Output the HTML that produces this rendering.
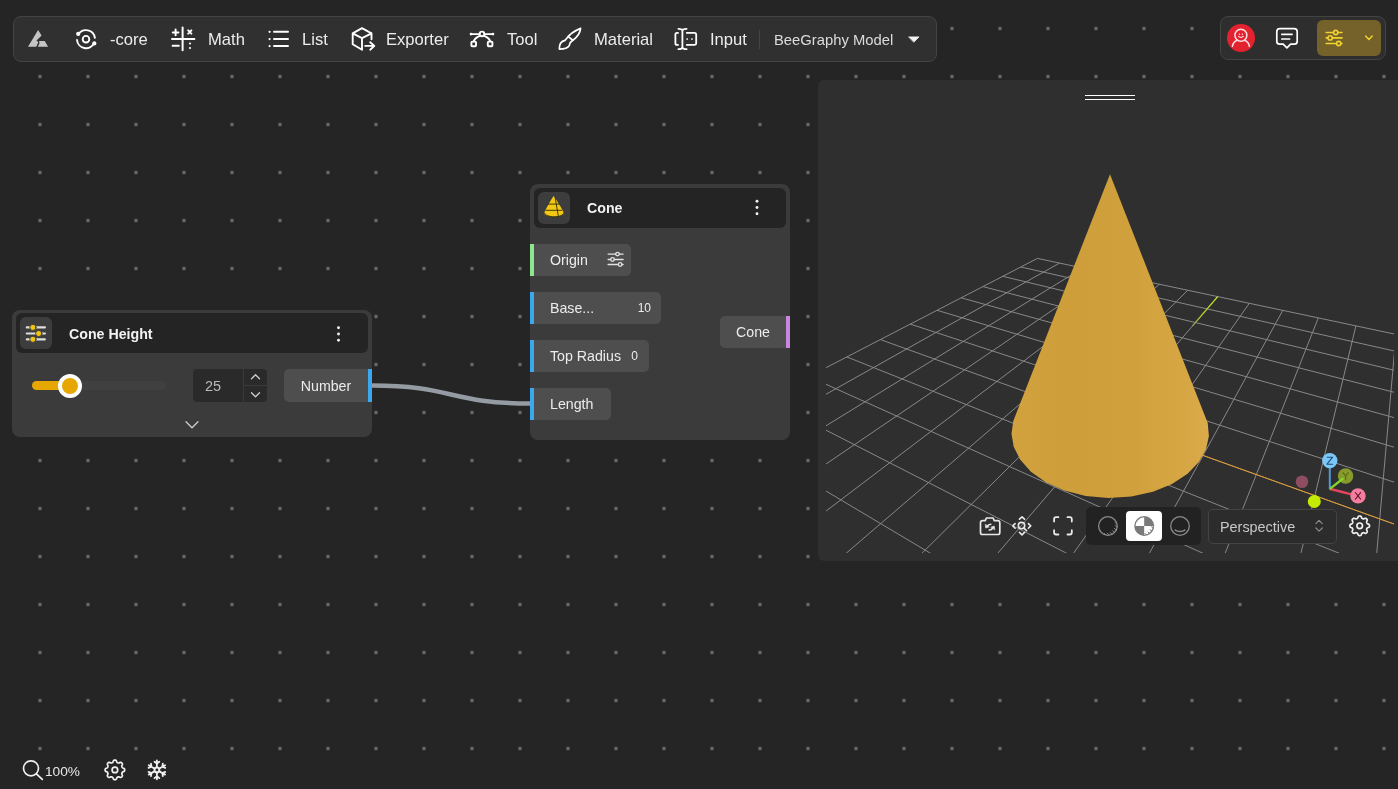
<!DOCTYPE html>
<html><head><meta charset="utf-8">
<style>
*{box-sizing:border-box;margin:0;padding:0}
html,body{width:1398px;height:789px;overflow:hidden}
body{position:relative;background-color:#252525;font-family:"Liberation Sans",sans-serif;color:#ececec;
background-image:radial-gradient(circle at 24px 24.5px,#707070 0,#656565 1.2px,rgba(95,95,95,0) 2.4px);
background-size:48px 48px;background-position:16px 4px}
.abs{position:absolute}
.tb{position:absolute;left:13px;top:16px;width:924px;height:46px;border:1px solid #444;border-radius:8px;background:#303030}
.tt{position:absolute;top:30px;height:20px;line-height:20px;font-size:16.6px;color:#ececec;white-space:nowrap}
svg{position:absolute;overflow:visible}
.node{position:absolute;background:#3b3b3b;border-radius:8px}
.hdr{position:absolute;background:#242424;border-radius:6px}
.ibox{position:absolute;width:32px;height:32px;background:#3d3d3d;border-radius:6px}
.title{position:absolute;font-weight:bold;font-size:14.2px;height:20px;line-height:20px;color:#f2f2f2;white-space:nowrap}
.port{position:absolute;height:32px;background:#4e4e4e;border-radius:0 5px 5px 0;font-size:14.2px;line-height:32px;color:#ececec;white-space:nowrap}
.port .s{position:absolute;left:0;top:0;width:4px;height:32px}
div{will-change:transform}
</style></head><body>

<!-- top toolbar -->
<div class="tb"></div>

<div class="tt" style="left:110px">-core</div>
<div class="tt" style="left:208px">Math</div>
<div class="tt" style="left:302px">List</div>
<div class="tt" style="left:386px">Exporter</div>
<div class="tt" style="left:507px">Tool</div>
<div class="tt" style="left:594px">Material</div>
<div class="tt" style="left:710px">Input</div>
<div class="abs" style="left:759px;top:30px;width:1px;height:19px;background:#444"></div>
<div class="tt" style="left:774px;font-size:14.8px;color:#dcdcdc">BeeGraphy Model</div>



<!-- top-right panel -->
<div class="abs" style="left:1220px;top:16px;width:166px;height:44px;border:1px solid #434343;border-radius:8px;background:#2e2e2e"></div>
<div class="abs" style="left:1317px;top:20px;width:64px;height:36px;border-radius:6px;background:#75612a"></div>
<div class="abs" style="left:1227px;top:24px;width:28px;height:28px;border-radius:50%;background:#e3222f"></div>

<!-- viewport panel -->
<div class="abs" style="left:818px;top:80px;width:590px;height:481px;border-radius:6px;background:#2f2f2f"></div>

<!--VP-->
<svg width="1398" height="789" style="left:0;top:0" fill="none">
 <defs><clipPath id="vc"><rect x="826" y="88" width="568" height="465"/></clipPath>
 <linearGradient id="cg" x1="1011" y1="0" x2="1209" y2="0" gradientUnits="userSpaceOnUse">
  <stop offset="0" stop-color="#d2a23f"/><stop offset="0.25" stop-color="#cd9e3a"/><stop offset="0.6" stop-color="#cfa03b"/><stop offset="0.9" stop-color="#d7a745"/><stop offset="1" stop-color="#dcac4b"/></linearGradient>
 <linearGradient id="yg" x1="1217.7" y1="296.6" x2="1192.3" y2="326.2" gradientUnits="userSpaceOnUse">
  <stop offset="0" stop-color="#c8e01e"/><stop offset="0.6" stop-color="#b8d41e"/><stop offset="1" stop-color="#8f9a60"/></linearGradient>
 </defs>
 <g clip-path="url(#vc)">
  <path d="M1037.4 258.4L505.1 533.6M1037.4 258.4L1484.4 353.1M1059.5 263.1L528.6 561.3M1020.8 267.0L1488.6 372.2M1082.7 268.0L555.0 592.4M1002.7 276.3L1493.4 394.1M1107.0 273.1L585.0 627.7M982.9 286.6L1498.9 419.2M1132.6 278.5L619.1 668.0M961.1 297.8L1505.3 448.4M1159.5 284.2L658.5 714.4M937.1 310.3L1512.9 482.8M1187.8 290.2L704.4 768.4M910.3 324.1L1521.9 523.9M1217.7 296.6L758.6 832.3M880.4 339.6L1532.9 573.9M1249.3 303.3L823.5 908.8M846.8 356.9L1546.5 635.9M1282.8 310.4L902.7 1002.1M808.8 376.6L1563.9 715.0M1318.3 317.9L1001.5 1118.5M765.3 399.1L1586.8 819.4M1355.9 325.9L1128.1 1267.8M715.2 425.0L1618.4 963.2M1396.0 334.3L1296.4 1466.1M656.8 455.2L1664.8 1174.4M1438.7 343.4L1530.8 1742.3M587.8 490.9L1739.5 1514.6M1484.4 353.1L1879.9 2153.7M505.1 533.6L1879.9 2153.7" stroke="#888" stroke-width="1"/>
  <path d="M1217.7 296.6L1192.3 326.2" stroke="url(#yg)" stroke-width="1.3"/>
  <path d="M1110.2 422.1L1532.9 573.9" stroke="#e39a28" stroke-width="1"/>
  <path d="M1011.5 433.7L1013.3 421.0L1110.0 174.2L1207.7 423.1L1208.9 435.9L1206.1 448.9L1199.0 461.8L1187.6 473.7L1172.0 483.9L1153.0 491.8L1131.4 496.6L1108.5 498.1L1085.7 496.0L1064.4 490.6L1045.8 482.3L1030.9 471.8L1020.1 459.6L1013.7 446.7Z" fill="url(#cg)"/>
 </g>
</svg>
<svg width="1398" height="789" style="left:0;top:0" fill="none"><path d="M372 385.5C452 385.5 450 403.5 530 403.5" stroke="#959ba3" stroke-width="4.6"/></svg>
<!-- nodes -->
<div class="node" style="left:12px;top:310px;width:360px;height:127px"></div>
<div class="hdr" style="left:16px;top:313px;width:352px;height:40px"></div>
<div class="ibox" style="left:20px;top:317px"></div>
<div class="title" style="left:69px;top:324px">Cone Height</div>

<div class="node" style="left:530px;top:184px;width:260px;height:256px"></div>
<div class="hdr" style="left:534px;top:188px;width:252px;height:40px"></div>
<div class="ibox" style="left:538px;top:192px"></div>
<div class="title" style="left:587px;top:198px">Cone</div>

<!-- Cone Height body -->
<div class="abs" style="left:32px;top:381px;width:134px;height:9px;border-radius:5px;background:#404040"></div>
<div class="abs" style="left:32px;top:381px;width:40px;height:9px;border-radius:5px;background:#e6a700"></div>
<div class="abs" style="left:58px;top:373.5px;width:24px;height:24px;border-radius:50%;background:#e6a700;border:4px solid #fff"></div>
<div class="abs" style="left:193px;top:369px;width:74px;height:33px;border-radius:4px;background:#2a2a2a"></div>
<div class="abs" style="left:243px;top:369px;width:1px;height:33px;background:#3a3a3a"></div>
<div class="abs" style="left:244px;top:385px;width:23px;height:1px;background:#3a3a3a"></div>
<div class="abs" style="left:183px;top:376px;width:60px;height:20px;line-height:20px;text-align:center;font-size:14.5px;color:#bababa">25</div>
<div class="port" style="left:284px;top:369px;width:88px;height:33px;border-radius:5px 0 0 5px;line-height:35px;text-align:center;padding-right:4px">Number<div class="s" style="left:auto;right:0;height:33px;background:#3ba7ee"></div></div>

<!-- Cone inputs -->
<div class="port" style="left:530px;top:244px;width:101px;padding-left:20px">Origin<div class="s" style="background:#8ee68e"></div></div>
<div class="port" style="left:530px;top:292px;width:131px;padding-left:20px">Base...<div class="s" style="background:#3ba7ee"></div><span style="position:absolute;right:10px;top:0;font-size:12px">10</span></div>
<div class="port" style="left:530px;top:340px;width:119px;padding-left:20px">Top Radius<div class="s" style="background:#3ba7ee"></div><span style="position:absolute;right:11px;top:0;font-size:12px">0</span></div>
<div class="port" style="left:530px;top:388px;width:81px;padding-left:20px">Length<div class="s" style="background:#3ba7ee"></div></div>
<div class="port" style="left:720px;top:316px;width:70px;border-radius:5px 0 0 5px;padding-left:16px">Cone<div class="s" style="left:auto;right:0;background:#c886de"></div></div>



<!-- viewport overlays -->
<div class="abs" style="left:1085px;top:95px;width:50px;height:1px;background:#fff"></div>
<div class="abs" style="left:1085px;top:99px;width:50px;height:1px;background:#fff"></div>
<div class="abs" style="left:1086px;top:507px;width:115px;height:38px;border-radius:5px;background:#222"></div>
<div class="abs" style="left:1126px;top:511px;width:36px;height:30px;border-radius:4px;background:#fff"></div>
<div class="abs" style="left:1208px;top:509px;width:129px;height:35px;border-radius:5px;background:#2c2c2c;border:1px solid #444"></div>
<div class="abs" style="left:1220px;top:517px;height:20px;line-height:20px;font-size:14.4px;color:#c8c8c8;white-space:nowrap">Perspective</div>
<div class="abs" style="left:20px;top:760px;height:20px;line-height:20px;font-size:13.7px;color:#e8e8e8;white-space:nowrap"></div>
<div class="abs" style="left:45px;top:762px;height:20px;line-height:20px;font-size:13.7px;color:#e8e8e8;white-space:nowrap">100%</div>
<!--ICONS-->
<svg width="1398" height="789" style="left:0;top:0" fill="none" stroke="#fff" stroke-width="1.9" stroke-linecap="round" stroke-linejoin="round">
 <!-- logo -->
 <path d="M38.1 29.9L41.6 35.6L36.5 40.4L38.3 42.3L36.2 46.8L28 46.8Z" fill="#c4c4c4" stroke="none"/>
 <path d="M37.9 46.8L39.5 43.3L39.1 40.9L44.7 40.9L48.1 46.8Z" fill="#c4c4c4" stroke="none"/>
 <!-- core -->
 <path d="M78.54 34.17A9 9 0 0 1 94.89 37.79M77.03 39.98A9 9 0 0 0 94.02 43.29"/>
 <circle cx="86" cy="39.2" r="3.3"/>
 <circle cx="78.2" cy="33.9" r="2.1" fill="#fff" stroke="none"/>
 <circle cx="94.3" cy="43.4" r="2.1" fill="#fff" stroke="none"/>
 <!-- math -->
 <path d="M182.6 27.5V50.3M172 38.9H194.4M172.8 32.4H178.4M175.6 29.6V35.2M188.2 30.4L191.4 33.6M191.4 30.4L188.2 33.6M172.6 45.7H178.8" stroke-width="2"/>
 <circle cx="190" cy="43.5" r="1.1" fill="#fff" stroke="none"/><circle cx="190" cy="48" r="1.1" fill="#fff" stroke="none"/>
 <!-- list -->
 <path d="M274 31.8H288M274 39.1H288M274 46.1H288" stroke-width="2"/>
 <circle cx="269.6" cy="31.8" r="1.1" fill="#fff" stroke="none"/><circle cx="269.6" cy="39.1" r="1.1" fill="#fff" stroke="none"/><circle cx="269.6" cy="46.1" r="1.1" fill="#fff" stroke="none"/>
 <!-- exporter -->
 <path d="M362 28.2L371.5 33.3V39.2M362 28.2L352.7 33.3L362 38.2L371.5 33.3M352.7 33.3V44.2L362 49.7V38.2M365.2 45.9H374.3M370.2 42.2L374.3 45.9L370.2 49.7"/>
 <!-- tool -->
 <path d="M471 34.1H479.2M484.8 34.1H493M479.6 35.8C476 37.6 474 39.5 473.8 41.4M484.4 35.8C488 37.6 490 39.5 490.2 41.4"/>
 <circle cx="482" cy="33.9" r="2.3"/>
 <rect x="471.4" y="41.6" width="4.6" height="4.6" rx="0.8"/>
 <rect x="487.8" y="41.6" width="4.6" height="4.6" rx="0.8"/>
 <circle cx="471" cy="34.1" r="1.3" fill="#fff" stroke="none"/><circle cx="493" cy="34.1" r="1.3" fill="#fff" stroke="none"/>
 <!-- material -->
 <path d="M580.6 28.4C575.5 30.5 569.5 34.5 566.8 38.3L565 40.4C561 41.2 559.2 44.5 559.3 49.1C563.5 49.1 567.6 48.6 569.2 45.6C569.9 44.3 569.9 43 570.3 42.5L573 40.2C577.3 37 580.2 32.5 580.6 28.4Z" stroke-width="1.7"/>
 <path d="M568.3 36.6L572.5 40" stroke-width="1.7"/>
 <!-- input -->
 <path d="M678 32.9H677C675.9 32.9 675.4 33.6 675.4 34.6V43.2C675.4 44.2 675.9 44.9 677 44.9H678M686.8 32.9H694.4C695.5 32.9 696.2 33.6 696.2 34.7V43.1C696.2 44.2 695.5 44.9 694.4 44.9H686.8M682.4 29.6V48.4M678.4 28.8C680.5 28.8 682.4 29.4 682.4 31M686.6 28.8C684.5 28.8 682.4 29.4 682.4 31M678.4 49.2C680.5 49.2 682.4 48.6 682.4 47M686.6 49.2C684.5 49.2 682.4 48.6 682.4 47" stroke-width="1.8"/>
 <rect x="686.4" y="38.3" width="1.5" height="1.5" fill="#fff" stroke="none"/><rect x="691.2" y="38.3" width="1.5" height="1.5" fill="#fff" stroke="none"/>
 <!-- dropdown triangle -->
 <path d="M909 36.9H919L914 42Z" fill="#f4f4f4" stroke="#f4f4f4" stroke-width="0.8"/>

 <!-- node icons -->
 <g stroke="none" fill="#f0f0f0">
  <circle cx="338.5" cy="327.8" r="1.45"/><circle cx="338.5" cy="334" r="1.45"/><circle cx="338.5" cy="340.2" r="1.45"/>
  <circle cx="757" cy="201.3" r="1.45"/><circle cx="757" cy="207.5" r="1.45"/><circle cx="757" cy="213.7" r="1.45"/>
 </g>
 <path d="M26.8 327.4H44.9M26.8 333.5H44.9M26.8 339.3H44.9" stroke="#dedede" stroke-width="2.2"/>
 <g fill="#f2c40f" stroke="#3d3d3d" stroke-width="1"><circle cx="32.9" cy="327.4" r="3.1"/><circle cx="38.7" cy="333.5" r="3.1"/><circle cx="32.9" cy="339.3" r="3.1"/></g>
 <path d="M553.6 196C552 198 545.5 209.5 544.2 212.8C543.5 214.7 548 216.8 554.2 216.8C560.5 216.8 564.6 214.7 563.8 212.8C562.6 209.5 555.3 198 553.6 196Z" fill="#f3c814" stroke="none"/>
 <path d="M548.3 204.1H559.2M545.9 210.3H561.9M555.2 197.8L558.4 216.4M544.2 212.8C544.8 214.8 549 216.8 554.2 216.8C560 216.8 563.6 214.8 563.8 212.8" stroke="#2d2a10" stroke-width="0.9"/>
 <path d="M186 421.8L192 427.8L198 421.8" stroke="#cfcfcf" stroke-width="1.3"/>
 <path d="M251.5 378.8L255.5 374.8L259.5 378.8M251.5 392.8L255.5 396.8L259.5 392.8" stroke="#cfcfcf" stroke-width="1.3"/>
 <g stroke="#e2e2e2" stroke-width="1.3">
  <path d="M608.1 254.1H615.7M619.3 254.1H623.1M608.1 259.5H610.7M614.3 259.5H623.1M608.1 264.5H618.3M621.9 264.5H623.1"/>
  <circle cx="617.5" cy="254.1" r="1.8"/><circle cx="612.5" cy="259.5" r="1.8"/><circle cx="620.1" cy="264.5" r="1.8"/>
 </g>

 <!-- viewport icons -->
 <g stroke="#e8e8e8" stroke-width="1.7">
  <path d="M982.6 520.7H985.2L986.4 518H993.1L994.3 520.7H997.7C998.9 520.7 999.8 521.6 999.8 522.8V532.4C999.8 533.6 998.9 534.5 997.7 534.5H982.6C981.4 534.5 980.5 533.6 980.5 532.4V522.8C980.5 521.6 981.4 520.7 982.6 520.7Z"/>
  <path d="M990.8 524.2C989.2 524.3 987.9 525 987.2 526.2M989.2 530C990.8 529.9 992.1 529.2 992.8 528" stroke-width="1.6"/><path d="M985.3 524.6L985.7 528.1L988.9 527.1ZM994.7 529.6L994.3 526.1L991.1 527.1Z" fill="#e8e8e8" stroke-width="0.6"/>
  <circle cx="1021.5" cy="525.6" r="3.2" stroke-width="1.6"/>
  <path d="M1023.9 528.1L1026.6 530.6M1019.5 519.2L1022 516.8L1024.5 519.2M1019.5 532.4L1022 534.8L1024.5 532.4M1015.1 523.6L1012.8 525.9L1015.1 528.2M1028.4 523.6L1030.7 525.9L1028.4 528.2" stroke-width="1.6"/>
  <path d="M1054.1 521.5V519.2C1054.1 518.1 1055 517.2 1056.1 517.2H1058.4M1067.5 517.2H1069.8C1070.9 517.2 1071.8 518.1 1071.8 519.2V521.5M1071.8 530.2V532.5C1071.8 533.6 1070.9 534.5 1069.8 534.5H1067.5M1058.4 534.5H1056.1C1055 534.5 1054.1 533.6 1054.1 532.5V530.2" stroke-width="1.8"/>
 </g>
 <g stroke="#8a8a8a" stroke-width="1.3">
  <circle cx="1107.9" cy="526" r="9.3"/>
  <path d="M1117.06 524.39L1115.22 522.55M1117.10 527.35L1115.26 525.51M1116.21 530.17L1114.37 528.34M1114.48 532.58L1112.64 530.74M1112.07 534.31L1110.24 532.47M1109.25 535.20L1107.41 533.36M1106.29 535.16L1104.45 533.32" stroke-width="1"/>
  <circle cx="1180" cy="526" r="9.3"/>
  <path d="M1175.2 530.2C1177.8 532 1182.2 532 1184.8 530.2" stroke-width="1.6"/>
 </g>
 <path d="M1144.2 516.7A9.3 9.3 0 0 1 1153.5 526H1144.2Z" fill="#7a7a7a" stroke="none"/>
 <path d="M1144.2 535.3A9.3 9.3 0 0 1 1134.9 526H1144.2Z" fill="#7a7a7a" stroke="none"/>
 <circle cx="1144.2" cy="526" r="9.3" stroke="#7a7a7a" stroke-width="1.3"/>
 <path d="M1153.46 525.19L1151.77 523.49M1153.18 528.41L1151.49 526.71M1151.82 531.33L1150.12 529.64M1149.53 533.62L1147.84 531.92M1146.61 534.98L1144.91 533.29M1143.39 535.26L1141.69 533.57" stroke="#7a7a7a" stroke-width="1"/>
 <path d="M1315.9 523.6L1319.1 520.4L1322.3 523.6M1315.9 528L1319.1 531.2L1322.3 528" stroke="#8a8a8a" stroke-width="1.2"/>
 <!-- gizmo -->
 <circle cx="1302" cy="481.7" r="6.3" fill="#8e4d60" stroke="none"/>
 <circle cx="1314.3" cy="501.5" r="6.5" fill="#c4ec00" stroke="none"/>
 <path d="M1329.8 468.3V488.6" stroke="#4f9ad8" stroke-width="2"/>
  <path d="M1330.6 489L1350.4 494.2" stroke="#e8435f" stroke-width="2.4"/>
 <circle cx="1329.8" cy="460.6" r="7.7" fill="#7cc6f8" stroke="none"/>
 <circle cx="1345.6" cy="476" r="7.7" fill="#879a2c" stroke="none"/>
 <circle cx="1358" cy="495.9" r="7.7" fill="#f47ea0" stroke="none"/>
 <path d="M1330.6 488.4L1342.7 478.8" stroke="#80d42a" stroke-width="2.4"/>
 <path d="M1327.2 457.2H1332.6L1327 464.2H1332.6" stroke="#1d4f78" stroke-width="1.1"/>
 <path d="M1343 472.6L1345.6 476L1348.2 472.6M1345.6 476V479.6" stroke="#596b12" stroke-width="1.1"/>
 <path d="M1355.4 492.6L1360.6 499.2M1360.6 492.6L1355.4 499.2" stroke="#6e1a2e" stroke-width="1.1"/>
 <!-- bottom-left -->
 <g stroke="#f0f0f0" stroke-width="1.7">
  <circle cx="31" cy="768.3" r="7.5"/>
  <path d="M36.4 773.8L42.3 779.4"/>
 </g>
 <g stroke="#f0f0f0" stroke-width="1.7"><path d="M124.70 769.90L124.68 770.28L124.60 770.66L124.42 771.03L124.06 771.35L123.48 771.61L122.90 771.82L122.52 772.05L122.29 772.30L122.14 772.57L122.01 772.85L121.91 773.13L121.82 773.43L121.80 773.77L121.92 774.20L122.18 774.76L122.40 775.35L122.43 775.84L122.30 776.22L122.09 776.54L121.83 776.83L121.54 777.09L121.22 777.30L120.84 777.43L120.35 777.40L119.76 777.18L119.20 776.92L118.77 776.80L118.43 776.82L118.13 776.91L117.85 777.01L117.57 777.14L117.30 777.29L117.05 777.52L116.82 777.90L116.61 778.48L116.35 779.06L116.03 779.42L115.66 779.60L115.28 779.68L114.90 779.70L114.52 779.68L114.14 779.60L113.77 779.42L113.45 779.06L113.19 778.48L112.98 777.90L112.75 777.52L112.50 777.29L112.23 777.14L111.95 777.01L111.67 776.91L111.37 776.82L111.03 776.80L110.60 776.92L110.04 777.18L109.45 777.40L108.96 777.43L108.58 777.30L108.26 777.09L107.97 776.83L107.71 776.54L107.50 776.22L107.37 775.84L107.40 775.35L107.62 774.76L107.88 774.20L108.00 773.77L107.98 773.43L107.89 773.13L107.79 772.85L107.66 772.57L107.51 772.30L107.28 772.05L106.90 771.82L106.32 771.61L105.74 771.35L105.38 771.03L105.20 770.66L105.12 770.28L105.10 769.90L105.12 769.52L105.20 769.14L105.38 768.77L105.74 768.45L106.32 768.19L106.90 767.98L107.28 767.75L107.51 767.50L107.66 767.23L107.79 766.95L107.89 766.67L107.98 766.37L108.00 766.03L107.88 765.60L107.62 765.04L107.40 764.45L107.37 763.96L107.50 763.58L107.71 763.26L107.97 762.97L108.26 762.71L108.58 762.50L108.96 762.37L109.45 762.40L110.04 762.62L110.60 762.88L111.03 763.00L111.37 762.98L111.67 762.89L111.95 762.79L112.23 762.66L112.50 762.51L112.75 762.28L112.98 761.90L113.19 761.32L113.45 760.74L113.77 760.38L114.14 760.20L114.52 760.12L114.90 760.10L115.28 760.12L115.66 760.20L116.03 760.38L116.35 760.74L116.61 761.32L116.82 761.90L117.05 762.28L117.30 762.51L117.57 762.66L117.85 762.79L118.13 762.89L118.43 762.98L118.77 763.00L119.20 762.88L119.76 762.62L120.35 762.40L120.84 762.37L121.22 762.50L121.54 762.71L121.83 762.97L122.09 763.26L122.30 763.58L122.43 763.96L122.40 764.45L122.18 765.04L121.92 765.60L121.80 766.03L121.82 766.37L121.91 766.67L122.01 766.95L122.14 767.23L122.29 767.50L122.52 767.75L122.90 767.98L123.48 768.19L124.06 768.45L124.42 768.77L124.60 769.14L124.68 769.52Z"/><circle cx="114.9" cy="769.9" r="2.8"/>
  <path d="M156.90 773.30L156.90 779.30M154.50 778.10L156.90 776.30L159.30 778.10M153.96 771.60L148.76 774.60M148.60 771.92L151.36 773.10L151.00 776.08M153.96 768.20L148.76 765.20M151.00 763.72L151.36 766.70L148.60 767.88M156.90 766.50L156.90 760.50M159.30 761.70L156.90 763.50L154.50 761.70M159.84 768.20L165.04 765.20M165.20 767.88L162.44 766.70L162.80 763.72M159.84 771.60L165.04 774.60M162.80 776.08L162.44 773.10L165.20 771.92" stroke-width="1.8"/><circle cx="156.9" cy="769.9" r="2.4" stroke-width="1.9"/>
  <path d="M1369.50 525.80L1369.48 526.18L1369.40 526.56L1369.22 526.93L1368.86 527.25L1368.28 527.51L1367.70 527.72L1367.32 527.95L1367.09 528.20L1366.94 528.47L1366.81 528.75L1366.71 529.03L1366.62 529.33L1366.60 529.67L1366.72 530.10L1366.98 530.66L1367.20 531.25L1367.23 531.74L1367.10 532.12L1366.89 532.44L1366.63 532.73L1366.34 532.99L1366.02 533.20L1365.64 533.33L1365.15 533.30L1364.56 533.08L1364.00 532.82L1363.57 532.70L1363.23 532.72L1362.93 532.81L1362.65 532.91L1362.37 533.04L1362.10 533.19L1361.85 533.42L1361.62 533.80L1361.41 534.38L1361.15 534.96L1360.83 535.32L1360.46 535.50L1360.08 535.58L1359.70 535.60L1359.32 535.58L1358.94 535.50L1358.57 535.32L1358.25 534.96L1357.99 534.38L1357.78 533.80L1357.55 533.42L1357.30 533.19L1357.03 533.04L1356.75 532.91L1356.47 532.81L1356.17 532.72L1355.83 532.70L1355.40 532.82L1354.84 533.08L1354.25 533.30L1353.76 533.33L1353.38 533.20L1353.06 532.99L1352.77 532.73L1352.51 532.44L1352.30 532.12L1352.17 531.74L1352.20 531.25L1352.42 530.66L1352.68 530.10L1352.80 529.67L1352.78 529.33L1352.69 529.03L1352.59 528.75L1352.46 528.47L1352.31 528.20L1352.08 527.95L1351.70 527.72L1351.12 527.51L1350.54 527.25L1350.18 526.93L1350.00 526.56L1349.92 526.18L1349.90 525.80L1349.92 525.42L1350.00 525.04L1350.18 524.67L1350.54 524.35L1351.12 524.09L1351.70 523.88L1352.08 523.65L1352.31 523.40L1352.46 523.13L1352.59 522.85L1352.69 522.57L1352.78 522.27L1352.80 521.93L1352.68 521.50L1352.42 520.94L1352.20 520.35L1352.17 519.86L1352.30 519.48L1352.51 519.16L1352.77 518.87L1353.06 518.61L1353.38 518.40L1353.76 518.27L1354.25 518.30L1354.84 518.52L1355.40 518.78L1355.83 518.90L1356.17 518.88L1356.47 518.79L1356.75 518.69L1357.03 518.56L1357.30 518.41L1357.55 518.18L1357.78 517.80L1357.99 517.22L1358.25 516.64L1358.57 516.28L1358.94 516.10L1359.32 516.02L1359.70 516.00L1360.08 516.02L1360.46 516.10L1360.83 516.28L1361.15 516.64L1361.41 517.22L1361.62 517.80L1361.85 518.18L1362.10 518.41L1362.37 518.56L1362.65 518.69L1362.93 518.79L1363.23 518.88L1363.57 518.90L1364.00 518.78L1364.56 518.52L1365.15 518.30L1365.64 518.27L1366.02 518.40L1366.34 518.61L1366.63 518.87L1366.89 519.16L1367.10 519.48L1367.23 519.86L1367.20 520.35L1366.98 520.94L1366.72 521.50L1366.60 521.93L1366.62 522.27L1366.71 522.57L1366.81 522.85L1366.94 523.13L1367.09 523.40L1367.32 523.65L1367.70 523.88L1368.28 524.09L1368.86 524.35L1369.22 524.67L1369.40 525.04L1369.48 525.42Z"/><circle cx="1359.7" cy="525.8" r="2.8"/></g>
 <!-- avatar -->
 <circle cx="1240.9" cy="35.2" r="6" stroke="#fbe3e3" stroke-width="1.5"/>
 <path d="M1238.6 36.4C1239.8 37.6 1242 37.6 1243.2 36.4" stroke="#fbe3e3" stroke-width="1.3"/>
 <circle cx="1239.4" cy="34.2" r="0.7" fill="#fbe3e3" stroke="none"/><circle cx="1242.4" cy="34.2" r="0.7" fill="#fbe3e3" stroke="none"/>
 <path d="M1232.4 46.4C1233 43 1235.5 40.8 1237.3 40.2M1249.4 46.4C1248.8 43 1246.3 40.8 1244.5 40.2" stroke="#fbe3e3" stroke-width="1.5"/>
 <!-- chat -->
 <path d="M1279.8 28.7H1294.2C1296 28.7 1297.2 29.9 1297.2 31.7V41.2C1297.2 43 1296 44.2 1294.2 44.2H1290.6L1286.9 47.9L1283.2 44.2H1279.8C1278 44.2 1276.8 43 1276.8 41.2V31.7C1276.8 29.9 1278 28.7 1279.8 28.7Z" stroke-width="1.7"/>
 <path d="M1281.8 34.3H1292.1M1281.8 39H1289.6" stroke-width="1.7"/>
 <!-- gold sliders -->
 <g stroke="#f0d232" stroke-width="1.6">
 <path d="M1326.2 32.5H1333.3M1338.1 32.5H1342M1332.5 37.9H1342M1326.2 43.5H1336.3M1341.1 43.5H1342M1326.2 37.9H1327.7"/>
 <circle cx="1335.7" cy="32.5" r="2.1"/><circle cx="1330.1" cy="37.9" r="2.1"/><circle cx="1338.7" cy="43.5" r="2.1"/>
 <path d="M1365.6 36L1368.9 39.4L1372.2 36" stroke-width="1.5"/>
 </g>
</svg>
</body></html>
